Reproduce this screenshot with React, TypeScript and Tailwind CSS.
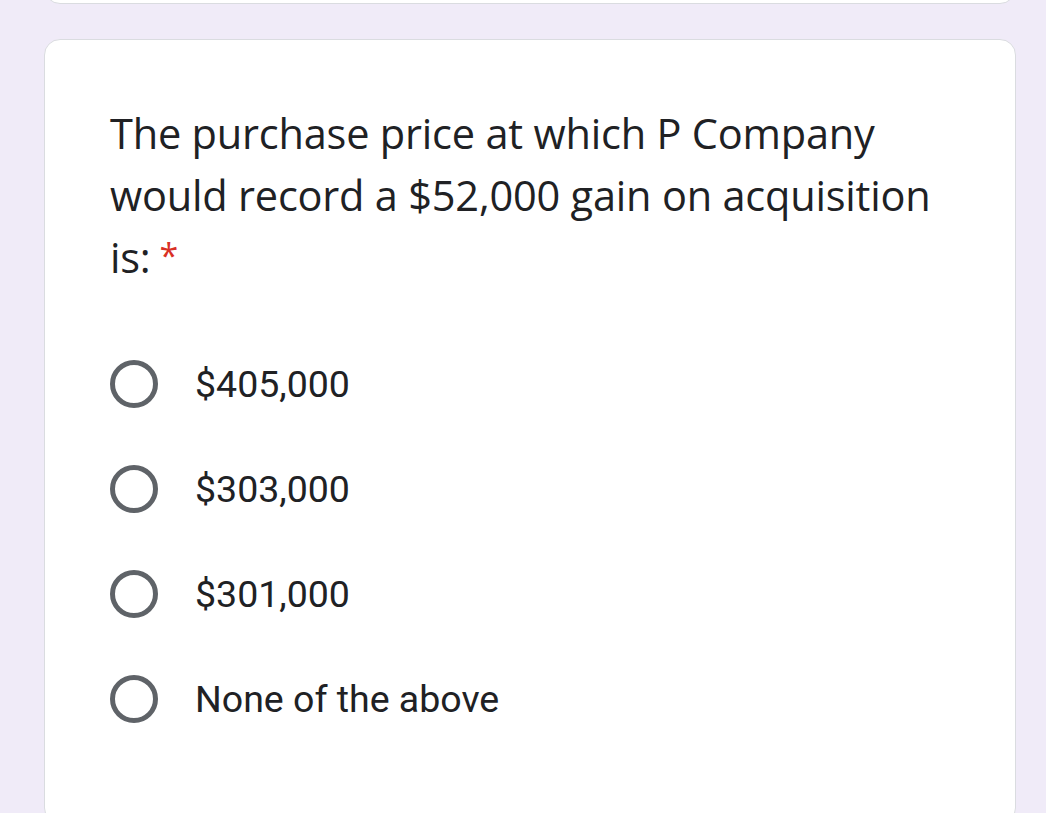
import React from 'react';

const options = ['$405,000', '$303,000', '$301,000', 'None of the above'];

export default function App() {
  return (
    <div className="w-[1046px] h-[813px] overflow-hidden bg-[#f0ebf8] flex flex-col items-start pl-[44px]">
      {/* previous question card, mostly scrolled off */}
      <div className="w-[972px] h-[40px] -mt-[36px] shrink-0 bg-white border border-[#dadce0] rounded-[16px]" />

      <div className="mt-[35px] w-[972px] shrink-0 bg-white border border-[#dadce0] rounded-[16px] pl-[65px] pr-[60px] pt-[62px] pb-[100px]">
        <div className="text-[41.5px] leading-[62px] text-[#202124] font-['Open_Sans',sans-serif] tracking-[-0.2px]">
          The purchase price at which P Company would record a $52,000 gain on acquisition is:
          <span className="text-[#d93025] ml-[9px] text-[34px] leading-none align-[5px]">*</span>
        </div>

        <div className="mt-[72px] flex flex-col gap-[57px]">
          {options.map((o) => (
            <div key={o} className="flex items-center gap-[37px]">
              <div className="w-[48px] h-[48px] rounded-full border-[5px] border-[#5f6368] shrink-0" />
              <span className="text-[37.5px] leading-[48px] text-[#202124] font-['Roboto',sans-serif]">{o}</span>
            </div>
          ))}
        </div>
      </div>
    </div>
  );
}
